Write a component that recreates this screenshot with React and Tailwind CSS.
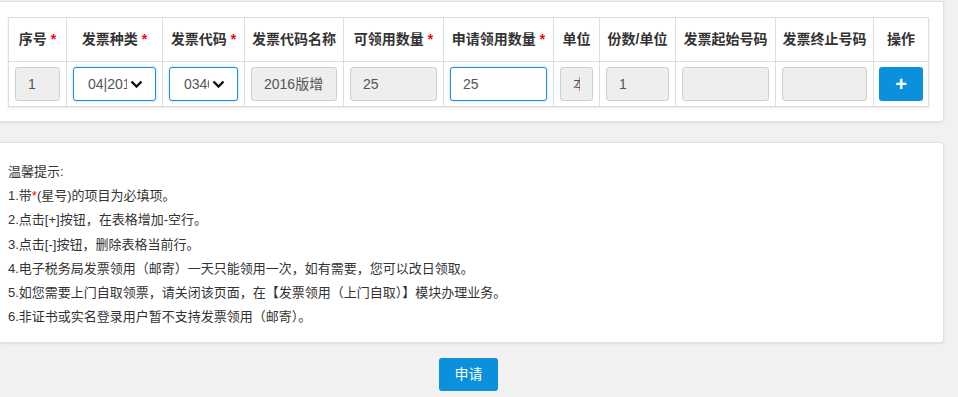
const columns = [
  { title: '序号', required: true, width: 58 },
  { title: '发票种类', required: true, width: 96 },
  { title: '发票代码', required: true, width: 82 },
  { title: '发票代码名称', width: 99 },
  { title: '可领用数量', required: true, width: 100 },
  { title: '申请领用数量', required: true, width: 110 },
  { title: '单位', width: 46 },
  { title: '份数/单位', width: 76 },
  { title: '发票起始号码', width: 100 },
  { title: '发票终止号码', width: 98 },
  { title: '操作', width: 55 },
];

const tips = [
  '1.带*(星号)的项目为必填项。',
  '2.点击[+]按钮，在表格增加-空行。',
  '3.点击[-]按钮，删除表格当前行。',
  '4.电子税务局发票领用（邮寄）一天只能领用一次，如有需要，您可以改日领取。',
  '5.如您需要上门自取领票，请关闭该页面，在【发票领用（上门自取）】模块办理业务。',
  '6.非证书或实名登录用户暂不支持发票领用（邮寄）。',
];

const font = { fontFamily: '"Liberation Sans", "Noto Sans CJK SC", sans-serif' };

// text is clipped at the content box, like a native input
const ReadOnlyInput = ({ value }) => (
  <div className="h-[34px] w-full rounded-[3px] border border-[#cfcfcf] bg-[#eeeeee] px-3 text-[14px] leading-[32px] text-[#555]">
    <div className="h-full overflow-hidden whitespace-nowrap">{value}</div>
  </div>
);

const Chevron = () => (
  <svg width="13" height="9" viewBox="0 0 13 9" className="ml-[3px] shrink-0">
    <path d="M1.5 1.5 L6.5 6.5 L11.5 1.5" fill="none" stroke="#111" strokeWidth="2.4" />
  </svg>
);

const FakeSelect = ({ value }) => (
  <div className="flex h-[34px] w-full items-center rounded-[3px] border border-[#1a8fdd] bg-white pl-[14px] pr-[12px] text-[14px] text-[#555] shadow-[0_0_3px_rgba(26,143,221,0.35)]">
    <span className="flex-1 overflow-hidden whitespace-nowrap">{value}</span>
    <Chevron />
  </div>
);

const cell = 'border border-[#dddddd] px-[6px] pt-[5px] pb-[5px]';

export default function App() {
  return (
    <div className="min-h-[397px] bg-[#f1f1f1] pt-px text-[#333]" style={font}>
      {/* table panel */}
      <div className="w-[944px] rounded-br-[4px] border-t border-r border-b border-[#e2e2e2] bg-white pl-2 pt-[15px] pb-[14px] shadow-[0_1px_2px_rgba(0,0,0,0.08)]">
        <table className="table-fixed border-collapse shadow-[0_1px_2px_rgba(0,0,0,0.1)]" style={{ width: 920 }}>
          <thead>
            <tr className="h-[44px]">
              {columns.map((c) => (
                <th
                  key={c.title}
                  className="border border-[#dddddd] px-0 text-center text-[14px] font-bold text-[#333]"
                  style={{ width: c.width }}
                >
                  {c.title}
                  {c.required && <span className="ml-1 text-[#ff0000]">*</span>}
                </th>
              ))}
            </tr>
          </thead>
          <tbody>
            <tr className="h-[45px]">
              <td className={cell}><ReadOnlyInput value="1" /></td>
              <td className={cell}><FakeSelect value="04|2016版增值税专用发票" /></td>
              <td className={cell}><FakeSelect value="03400000" /></td>
              <td className={cell}><ReadOnlyInput value="2016版增值税专用发票" /></td>
              <td className={cell}><ReadOnlyInput value="25" /></td>
              <td className={cell}>
                <div className="h-[34px] w-full rounded-[3px] border border-[#1a8fdd] bg-white px-3 text-[14px] leading-[32px] text-[#555] shadow-[0_0_3px_rgba(26,143,221,0.35)]">
                  25
                </div>
              </td>
              <td className={cell}><ReadOnlyInput value="本" /></td>
              <td className={cell}><ReadOnlyInput value="1" /></td>
              <td className={cell}><ReadOnlyInput value="" /></td>
              <td className={cell}><ReadOnlyInput value="" /></td>
              <td className="border border-[#dddddd] px-[5px] pt-[5px] pb-[5px]">
                <button className="flex h-[34px] w-full items-center justify-center rounded-[3px] bg-[#0b91db] text-[20px] font-bold leading-none text-white">
                  +
                </button>
              </td>
            </tr>
          </tbody>
        </table>
      </div>

      {/* tips panel */}
      <div className="mt-[20px] w-[944px] rounded-r-[4px] border-t border-r border-b border-[#e2e2e2] bg-white pl-2 pt-[17px] pb-[13px] text-[13px] leading-[24.2px] text-[#333] shadow-[0_1px_2px_rgba(0,0,0,0.08)]">
        <p>温馨提示:</p>
        {tips.map((t, i) =>
          i === 0 ? (
            <p key={t}>
              1.带<span className="text-[#ff0000]">*</span>(星号)的项目为必填项。
            </p>
          ) : (
            <p key={t}>{t}</p>
          )
        )}
      </div>

      <div className="flex w-[944px] justify-center pt-[15px] pr-[7px]">
        <button className="h-[33px] w-[59px] rounded-[3px] bg-[#0b91db] text-[14px] text-white">申请</button>
      </div>
    </div>
  );
}
